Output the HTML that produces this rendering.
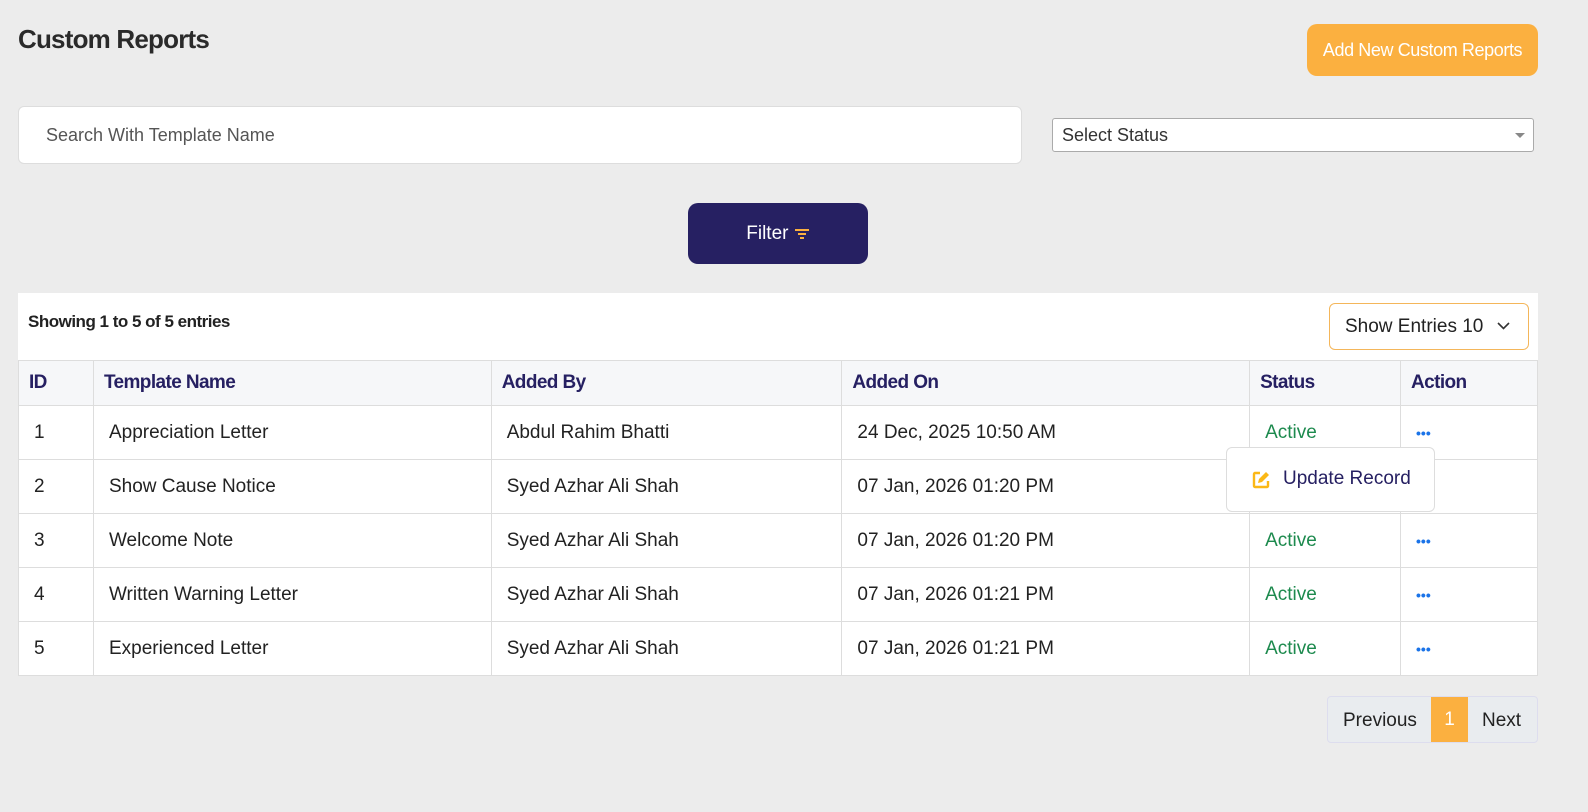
<!DOCTYPE html>
<html><head><style>
*{box-sizing:border-box;margin:0;padding:0}
body{width:1588px;height:812px;background:#ececec;font-family:"Liberation Sans",sans-serif;color:#222;position:relative;overflow:hidden}
.abs{position:absolute}
h1{position:absolute;left:18px;top:24px;font-size:26px;font-weight:bold;color:#2a2a2a;letter-spacing:-0.8px}
.addbtn{left:1307px;top:24px;width:231px;height:52px;background:#fbb040;border-radius:10px;color:#fff;font-size:18px;display:flex;align-items:center;justify-content:center;letter-spacing:-0.4px}
.search{left:18px;top:106px;width:1004px;height:58px;background:#fff;border:1px solid #ddd;border-radius:6px;font-size:18px;color:#555;padding:18px 27px}
.sel{left:1052px;top:118px;width:482px;height:34px;background:#fff;border:1px solid #aaa;border-radius:3px;font-size:18px;color:#333;padding:6px 9px}
.sel:after{content:"";position:absolute;right:8px;top:14px;border:5px solid transparent;border-top:5px solid #888}
.filter{left:688px;top:203px;width:180px;height:61px;background:#262062;border-radius:10px;color:#fff;font-size:19px;display:flex;align-items:center;justify-content:center}
.panel{left:18px;top:293px;width:1520px;height:67px;background:#fff}
.showing{left:28px;top:312px;font-size:17px;font-weight:bold;color:#222;letter-spacing:-0.5px}
.entries{left:1329px;top:303px;width:200px;height:47px;border:1px solid #f4b65a;border-radius:6px;background:#fff;font-size:19px;padding:12px 15px;color:#222}
table{position:absolute;left:18px;top:360px;width:1520px;border-collapse:collapse;background:#fff;font-size:19px}
td,th{border:1px solid #ddd;text-align:left;padding:0 15px;height:54px;font-weight:normal}
th{background:#f6f7f9;color:#262062;font-weight:bold;height:45px;padding:0 10px;letter-spacing:-0.6px}
.act{color:#1d8a4e}
.dots{color:#1a73e8;font-weight:bold;font-size:14px;letter-spacing:0px}
.pop{left:1226px;top:447px;width:209px;height:65px;background:#fff;border:1px solid #ddd;border-radius:6px;font-size:19px;color:#262062;padding:20px 0 0 56px}
.pag{left:1327px;top:696px;width:211px;height:47px;background:#e9ecef;border:1px solid #dde;border-radius:4px;font-size:19px}
</style></head><body>
<h1>Custom Reports</h1>
<div class="abs addbtn">Add New Custom Reports</div>
<div class="abs search">Search With Template Name</div>
<div class="abs sel">Select Status</div>
<div class="abs filter">Filter&nbsp;<svg width="16" height="12" viewBox="0 0 16 12"><path d="M1 2h14M4 6h8M6 10h4" stroke="#fbb040" stroke-width="2"/></svg></div>
<div class="abs panel"></div>
<div class="abs showing">Showing 1 to 5 of 5 entries</div>
<div class="abs entries">Show Entries 10 <svg style="position:absolute;right:18px;top:18px" width="13" height="8" viewBox="0 0 13 8"><path d="M1 1l5.5 5.5L12 1" stroke="#333" stroke-width="1.6" fill="none"/></svg></div>
<table>
<colgroup><col style="width:75px"><col style="width:398px"><col style="width:351px"><col style="width:408px"><col style="width:151px"><col style="width:137px"></colgroup>
<tr><th>ID</th><th>Template Name</th><th>Added By</th><th>Added On</th><th>Status</th><th>Action</th></tr>
<tr><td>1</td><td>Appreciation Letter</td><td>Abdul Rahim Bhatti</td><td>24 Dec, 2025 10:50 AM</td><td class="act">Active</td><td class="dots">•••</td></tr>
<tr><td>2</td><td>Show Cause Notice</td><td>Syed Azhar Ali Shah</td><td>07 Jan, 2026 01:20 PM</td><td class="act">Active</td><td class="dots">•••</td></tr>
<tr><td>3</td><td>Welcome Note</td><td>Syed Azhar Ali Shah</td><td>07 Jan, 2026 01:20 PM</td><td class="act">Active</td><td class="dots">•••</td></tr>
<tr><td>4</td><td>Written Warning Letter</td><td>Syed Azhar Ali Shah</td><td>07 Jan, 2026 01:21 PM</td><td class="act">Active</td><td class="dots">•••</td></tr>
<tr><td>5</td><td>Experienced Letter</td><td>Syed Azhar Ali Shah</td><td>07 Jan, 2026 01:21 PM</td><td class="act">Active</td><td class="dots">•••</td></tr>
</table>
<div class="abs pop"><svg style="position:absolute;left:24px;top:22px" width="20" height="20" viewBox="0 0 20 20"><path d="M9 3H4a1 1 0 0 0-1 1v12a1 1 0 0 0 1 1h12a1 1 0 0 0 1-1v-5" stroke="#fbb817" stroke-width="2.4" fill="none"/><path d="M7 13l1-4 7-7 3 3-7 7z" fill="#fbb817"/></svg>Update Record</div>
<div class="abs pag"><span class="abs" style="left:15px;top:13px">Previous</span><span class="abs" style="left:103px;top:0;width:37px;height:45px;background:#fbb040;color:#fff;text-align:center;padding-top:12px">1</span><span class="abs" style="left:154px;top:13px">Next</span></div>
</body></html>
